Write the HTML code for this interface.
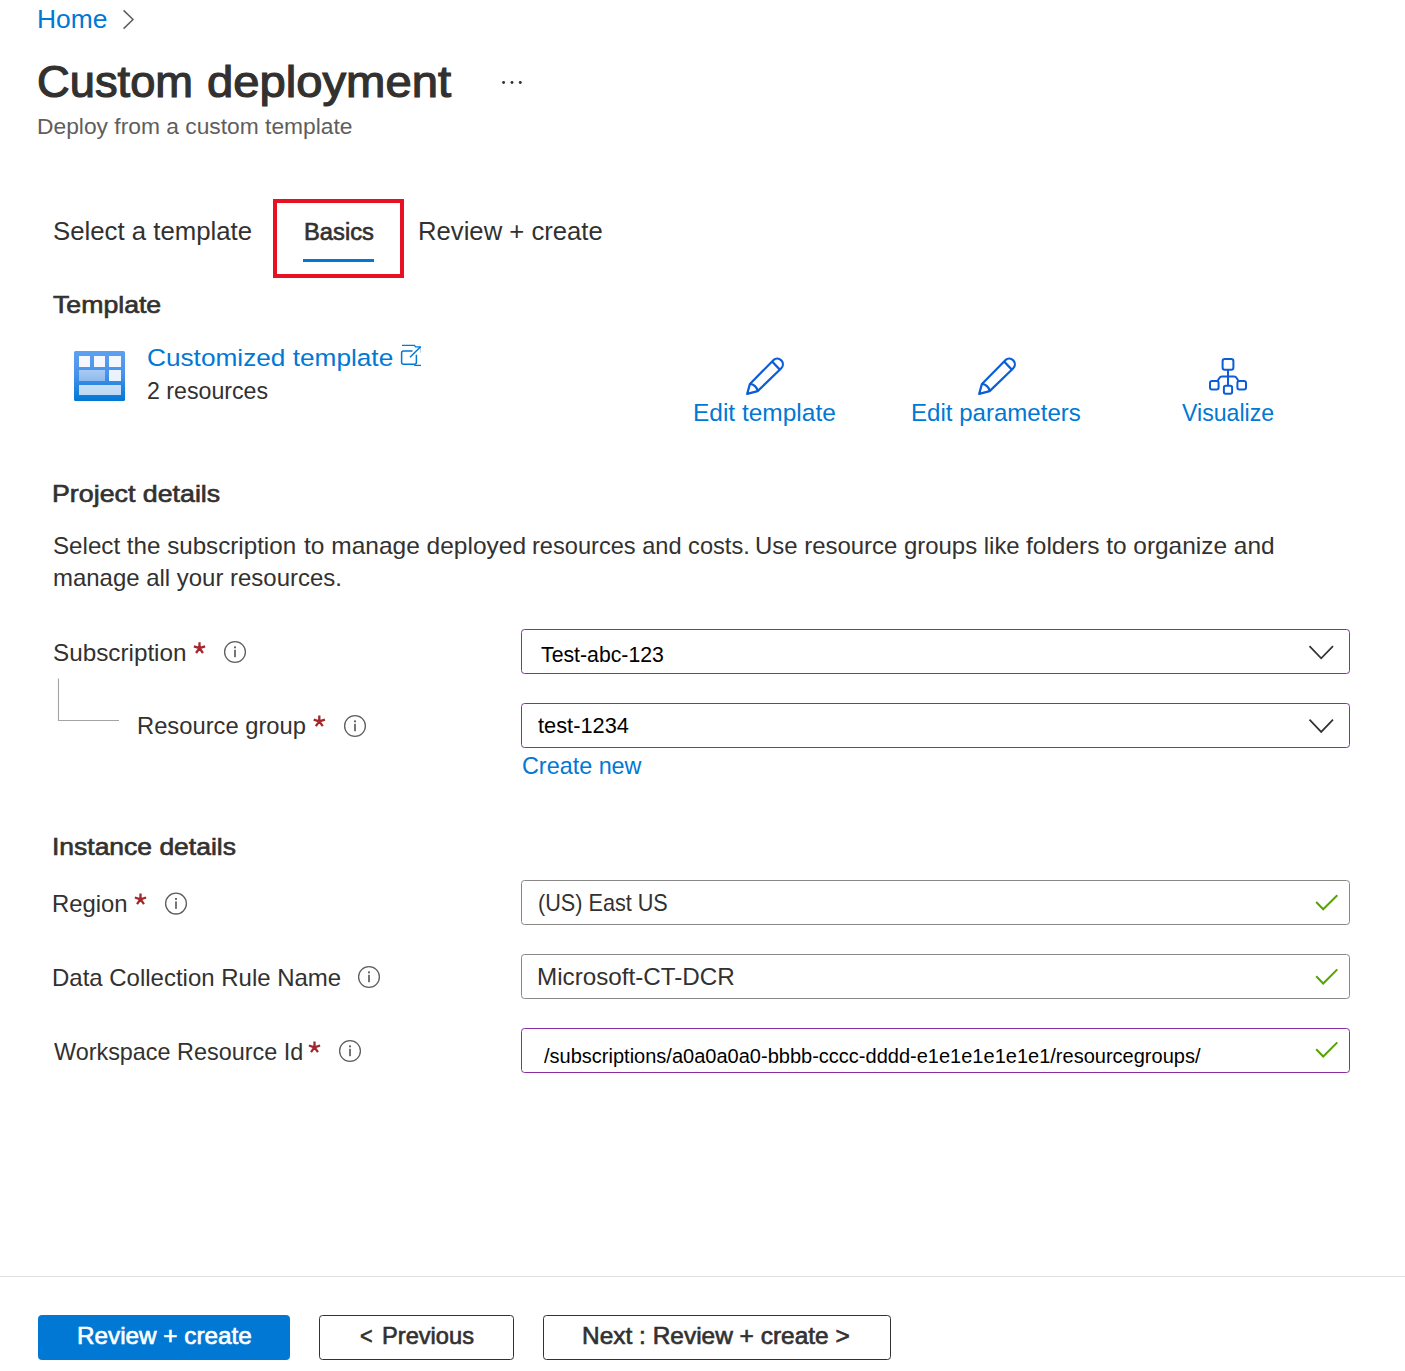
<!DOCTYPE html>
<html lang="en"><head><meta charset="utf-8"><title>Custom deployment</title>
<style>
html,body{margin:0;padding:0;background:#fff}
body{width:1405px;height:1371px;position:relative;overflow:hidden;font-family:"Liberation Sans",sans-serif}
.w{display:block;margin:0;padding:0;border:0;font:inherit}
.t{position:absolute;display:block;margin:0;padding:0;font-weight:400;line-height:1;white-space:pre;transform-origin:0 0;text-decoration:none}
.abs{position:absolute}
.inp{position:absolute;left:521px;width:827px;height:43px;border:1px solid;border-radius:3.5px;background:#fff}
.btn{position:absolute;top:1315px;height:45px;box-sizing:border-box;margin:0;padding:0;font:inherit;border-radius:3.5px;border:1px solid #323130;background:#fff}
.btn.primary{background:#0078d4;border-color:#0078d4}
svg.ov{position:absolute;left:0;top:0;pointer-events:none}
</style></head><body>

<header class="w">
<nav class="w"><a class="t" href="#" style="left:37.41px;top:7.00px;font-size:25.4px;color:#0078d4;transform:scaleX(1.0404)">Home</a></nav>
<h1 class="w"><span class="t" style="left:37.16px;top:60.00px;font-size:44.6px;color:#323130;-webkit-text-stroke:1.20px #323130;transform:scaleX(1.0161)">Custom</span><span class="t" style="left:206.62px;top:60.00px;font-size:44.6px;color:#323130;-webkit-text-stroke:1.20px #323130;transform:scaleX(1.0584)">deployment</span></h1>
<div class="t" style="left:37.14px;top:116.00px;font-size:22.2px;color:#605e5c;transform:scaleX(1.0277)">Deploy from a custom template</div>
</header>
<nav class="w">
<span class="t" style="left:52.67px;top:219.00px;font-size:25.2px;color:#323130;transform:scaleX(1.0229)">Select a template</span>
<div class="abs" style="left:273px;top:199px;width:123px;height:71px;border:4px solid #e81123"></div>
<span class="t" style="left:303.64px;top:220.00px;font-size:24.4px;color:#323130;-webkit-text-stroke:0.66px #323130;transform:scaleX(0.9730)">Basics</span>
<div class="abs" style="left:303px;top:259px;width:71px;height:3.3px;background:#0078d4"></div>
<span class="t" style="left:418.16px;top:219.00px;font-size:25.2px;color:#323130;transform:scaleX(1.0192)">Review + create</span>
</nav>
<main class="w">
<section class="w">
<h2 class="t" style="left:52.97px;top:293.00px;font-size:24.5px;color:#323130;-webkit-text-stroke:0.66px #323130;transform:scaleX(1.0884)">Template</h2>
<div class="abs" style="left:74px;top:351px;width:51px;height:49.5px;border-radius:1.5px;background:linear-gradient(#5ea0ef,#4a93ea 45%,#0078d4)">
<i class="abs" style="left:4.5px;top:5.4px;width:11.7px;height:10.4px;background:#f4f8fe"></i>
<i class="abs" style="left:19.7px;top:5.4px;width:11.6px;height:10.4px;background:#f4f8fe"></i>
<i class="abs" style="left:35px;top:5.4px;width:11.9px;height:10.4px;background:#f4f8fe"></i>
<i class="abs" style="left:4.5px;top:19.3px;width:26.8px;height:10.6px;background:linear-gradient(#a9cbf3,#8fbaee)"></i>
<i class="abs" style="left:35px;top:19.3px;width:11.9px;height:10.6px;background:#e9f2fd"></i>
<i class="abs" style="left:4.5px;top:33.8px;width:42.4px;height:10.4px;background:linear-gradient(#c9dff7,#bdd8f4)"></i>
</div>
<a class="t" href="#" style="left:146.61px;top:346.00px;font-size:24.5px;color:#0078d4;transform:scaleX(1.0699)">Customized template</a>
<span class="t" style="left:146.71px;top:380.00px;font-size:23.4px;color:#323130;transform:scaleX(0.9909)">2 resources</span>
<a class="t" href="#" style="left:693.23px;top:401.00px;font-size:24.8px;color:#0078d4;transform:scaleX(0.9866)">Edit template</a>
<a class="t" href="#" style="left:911.27px;top:401.00px;font-size:24.8px;color:#0078d4;transform:scaleX(0.9702)">Edit parameters</a>
<a class="t" href="#" style="left:1182.22px;top:401.00px;font-size:24.8px;color:#0078d4;transform:scaleX(0.9322)">Visualize</a>
</section>
<section class="w">
<h2 class="t" style="left:51.79px;top:482.00px;font-size:24.5px;color:#323130;-webkit-text-stroke:0.66px #323130;transform:scaleX(1.0931)">Project details</h2>
<p class="w"><span class="t" style="left:52.69px;top:534.00px;font-size:24.0px;color:#323130;transform:scaleX(1.0067)">Select the subscription</span><span class="t" style="left:303.89px;top:534.00px;font-size:24.0px;color:#323130;transform:scaleX(1.0209)">to manage deployed</span><span class="t" style="left:532.02px;top:534.00px;font-size:24.0px;color:#323130;transform:scaleX(0.9834)">resources and costs.</span><span class="t" style="left:754.91px;top:534.00px;font-size:24.0px;color:#323130;transform:scaleX(0.9970)">Use resource groups like</span><span class="t" style="left:1026.19px;top:534.00px;font-size:24.0px;color:#323130;transform:scaleX(1.0182)">folders to organize and</span><span class="t" style="left:52.70px;top:566.00px;font-size:24.0px;color:#323130;transform:scaleX(0.9979)">manage all your resources.</span></p>
<label class="t" style="left:52.69px;top:641.00px;font-size:24.0px;color:#323130;transform:scaleX(1.0108)">Subscription</label>
<div class="inp" style="top:629px;border-color:#8a2da5"><span class="t" style="left:19.01px;top:14.00px;font-size:22.2px;color:#000000;transform:scaleX(0.9584)">Test-abc-123</span></div>
<label class="t" style="left:136.72px;top:714.00px;font-size:24.0px;color:#323130;transform:scaleX(0.9892)">Resource group</label>
<div class="inp" style="top:703px;border-color:#8a2da5"><span class="t" style="left:16.01px;top:11.00px;font-size:22.2px;color:#000000;transform:scaleX(0.9825)">test-1234</span></div>
<a class="t" href="#" style="left:521.63px;top:754.00px;font-size:24.0px;color:#0078d4;transform:scaleX(0.9736)">Create new</a>
</section>
<section class="w">
<h2 class="t" style="left:52.22px;top:835.00px;font-size:24.5px;color:#323130;-webkit-text-stroke:0.66px #323130;transform:scaleX(1.0800)">Instance details</h2>
<label class="t" style="left:52.01px;top:892.00px;font-size:24.0px;color:#323130;transform:scaleX(0.9945)">Region</label>
<div class="inp" style="top:880px;border-color:#8a8886"><span class="t" style="left:15.82px;top:10.00px;font-size:23.8px;color:#323130;transform:scaleX(0.9088)">(US) East US</span></div>
<label class="t" style="left:52.40px;top:966.00px;font-size:24.0px;color:#323130;transform:scaleX(0.9990)">Data Collection Rule Name</label>
<div class="inp" style="top:954px;border-color:#8a8886"><span class="t" style="left:14.66px;top:10.00px;font-size:23.8px;color:#323130;transform:scaleX(1.0179)">Microsoft-CT-DCR</span></div>
<label class="t" style="left:53.51px;top:1040.00px;font-size:24.0px;color:#323130;transform:scaleX(0.9747)">Workspace Resource Id</label>
<div class="inp" style="top:1028px;border-color:#8a2da5"><span class="t" style="left:22.19px;top:18.00px;font-size:19.5px;color:#000000;transform:scaleX(1.0264)">/subscriptions/a0a0a0a0-bbbb-cccc-dddd-e1e1e1e1e1e1/resourcegroups/</span></div>
</section>
</main>
<footer class="w">
<div class="abs" style="left:0;top:1276px;width:1405px;height:1px;background:#e1dfdd"></div>
<button class="btn primary" style="left:38px;width:252px"><span class="t" style="left:37.87px;top:9.00px;font-size:23.7px;color:#ffffff;-webkit-text-stroke:0.64px #ffffff;transform:scaleX(1.0249)">Review + create</span></button>
<button class="btn" style="left:319px;width:194.7px"><span class="t" style="left:40.21px;top:9.00px;font-size:23.7px;color:#323130;-webkit-text-stroke:0.64px #323130;transform:scaleX(0.9123)">&lt;</span><span class="t" style="left:62.30px;top:9.00px;font-size:23.7px;color:#323130;-webkit-text-stroke:0.64px #323130;transform:scaleX(0.9978)">Previous</span></button>
<button class="btn" style="left:543.2px;width:347.6px"><span class="t" style="left:37.76px;top:9.00px;font-size:23.7px;color:#323130;-webkit-text-stroke:0.64px #323130;transform:scaleX(1.0322)">Next : Review + create &gt;</span></button>
</footer>
<svg class="ov" width="1405" height="1371" viewBox="0 0 1405 1371" aria-hidden="true">
<!-- breadcrumb chevron -->
<polyline points="123.6,10.4 133,19.5 123.6,28.6" fill="none" stroke="#605e5c" stroke-width="1.5"/>
<!-- more (...) -->
<circle cx="503.6" cy="82.5" r="1.45" fill="#323130"/>
<circle cx="512" cy="82.5" r="1.45" fill="#323130"/>
<circle cx="520.3" cy="82.5" r="1.45" fill="#323130"/>
<!-- external link icon -->
<g fill="none" stroke="#0078d4" stroke-width="1.5"><path d="M412.5 351 H403.6 A2 2 0 0 0 401.6 353 V362.2 A2 2 0 0 0 403.6 364.2 H414.4 A2 2 0 0 0 416.4 362.2 V354.7"/><path d="M410 357.3 L420.6 346.8"/><path d="M402 345.4 H414.5 L415.5 346.8 H420.8" stroke-width="1.3"/><path d="M414.2 365.4 H421" stroke-width="1.3"/><path d="M420.4 347 V352.6" stroke-width="0.8" opacity="0.45"/></g>
<!-- edit pencils -->
<g transform="translate(746,357.6)" fill="none" stroke="#0b5ed7" stroke-width="2.2" stroke-linejoin="round"><path d="M1.2 36.3 L3.93 26.3 L27.6 2.37 A5.65 5.65 0 0 1 35.07 10.84 L11.65 33.5 Z"/><path d="M3.93 26.3 C7.6 26.4 11.2 29.6 11.65 33.5"/><path d="M26.1 3.87 L33.83 12.03"/></g>
<g transform="translate(978,357.6)" fill="none" stroke="#0b5ed7" stroke-width="2.2" stroke-linejoin="round"><path d="M1.2 36.3 L3.93 26.3 L27.6 2.37 A5.65 5.65 0 0 1 35.07 10.84 L11.65 33.5 Z"/><path d="M3.93 26.3 C7.6 26.4 11.2 29.6 11.65 33.5"/><path d="M26.1 3.87 L33.83 12.03"/></g>
<!-- visualize icon -->
<g fill="none" stroke="#0b5ed7" stroke-width="2"><rect x="1222.6" y="359.1" width="10.8" height="10.6" rx="2.2"/><rect x="1210" y="381" width="8.6" height="8.4" rx="2"/><rect x="1237.4" y="381" width="8.6" height="8.4" rx="2"/><rect x="1223.9" y="385.8" width="8.2" height="8" rx="1.8"/><path d="M1228 369.7 V385.8"/><path d="M1217.6 381 L1219.2 378.3 Q1220.2 376.6 1222 376.6 H1234 Q1235.8 376.6 1236.8 378.3 L1238.4 381"/></g>
<!-- sub-field connector -->
<path d="M58.5 678.5 V720.5 H119" fill="none" stroke="#a6a4a2" stroke-width="1.1"/>
<!-- required asterisks -->
<path d="M199.50 648.20L199.50 642.30M199.50 648.20L205.11 646.38M199.50 648.20L202.97 652.97M199.50 648.20L196.03 652.97M199.50 648.20L193.89 646.38" stroke="#a4262c" stroke-width="2.3" fill="none"/>
<path d="M319.30 721.40L319.30 715.50M319.30 721.40L324.91 719.58M319.30 721.40L322.77 726.17M319.30 721.40L315.83 726.17M319.30 721.40L313.69 719.58" stroke="#a4262c" stroke-width="2.3" fill="none"/>
<path d="M140.50 899.30L140.50 893.40M140.50 899.30L146.11 897.48M140.50 899.30L143.97 904.07M140.50 899.30L137.03 904.07M140.50 899.30L134.89 897.48" stroke="#a4262c" stroke-width="2.3" fill="none"/>
<path d="M314.50 1047.30L314.50 1041.40M314.50 1047.30L320.11 1045.48M314.50 1047.30L317.97 1052.07M314.50 1047.30L311.03 1052.07M314.50 1047.30L308.89 1045.48" stroke="#a4262c" stroke-width="2.3" fill="none"/>
<!-- info icons -->
<circle cx="235" cy="652" r="10.4" fill="none" stroke="#605e5c" stroke-width="1.3"/><rect x="234.15" y="649.8" width="1.7" height="7.4" fill="#605e5c"/><rect x="234.05" y="646.4" width="1.9" height="1.9" fill="#605e5c"/>
<circle cx="355" cy="726" r="10.4" fill="none" stroke="#605e5c" stroke-width="1.3"/><rect x="354.15" y="723.8" width="1.7" height="7.4" fill="#605e5c"/><rect x="354.05" y="720.4" width="1.9" height="1.9" fill="#605e5c"/>
<circle cx="176" cy="903.6" r="10.4" fill="none" stroke="#605e5c" stroke-width="1.3"/><rect x="175.15" y="901.4" width="1.7" height="7.4" fill="#605e5c"/><rect x="175.05" y="898.0" width="1.9" height="1.9" fill="#605e5c"/>
<circle cx="369" cy="977" r="10.4" fill="none" stroke="#605e5c" stroke-width="1.3"/><rect x="368.15" y="974.8" width="1.7" height="7.4" fill="#605e5c"/><rect x="368.05" y="971.4" width="1.9" height="1.9" fill="#605e5c"/>
<circle cx="350" cy="1051" r="10.4" fill="none" stroke="#605e5c" stroke-width="1.3"/><rect x="349.15" y="1048.8" width="1.7" height="7.4" fill="#605e5c"/><rect x="349.05" y="1045.4" width="1.9" height="1.9" fill="#605e5c"/>
<!-- dropdown chevrons / validation checks -->
<polyline points="1309.5,646.1 1321.2,658.3 1333,646.1" fill="none" stroke="#323130" stroke-width="1.7"/>
<polyline points="1309.5,719.7 1321.2,731.9 1333,719.7" fill="none" stroke="#323130" stroke-width="1.7"/>
<polyline points="1316.2,902.0 1323.2,909.3 1337.3,895.2" fill="none" stroke="#57a300" stroke-width="2"/>
<polyline points="1316.2,976.2 1323.2,983.5 1337.3,969.4" fill="none" stroke="#57a300" stroke-width="2"/>
<polyline points="1316.2,1049.2 1323.2,1056.5 1337.3,1042.4" fill="none" stroke="#57a300" stroke-width="2"/>
</svg>
</body></html>
